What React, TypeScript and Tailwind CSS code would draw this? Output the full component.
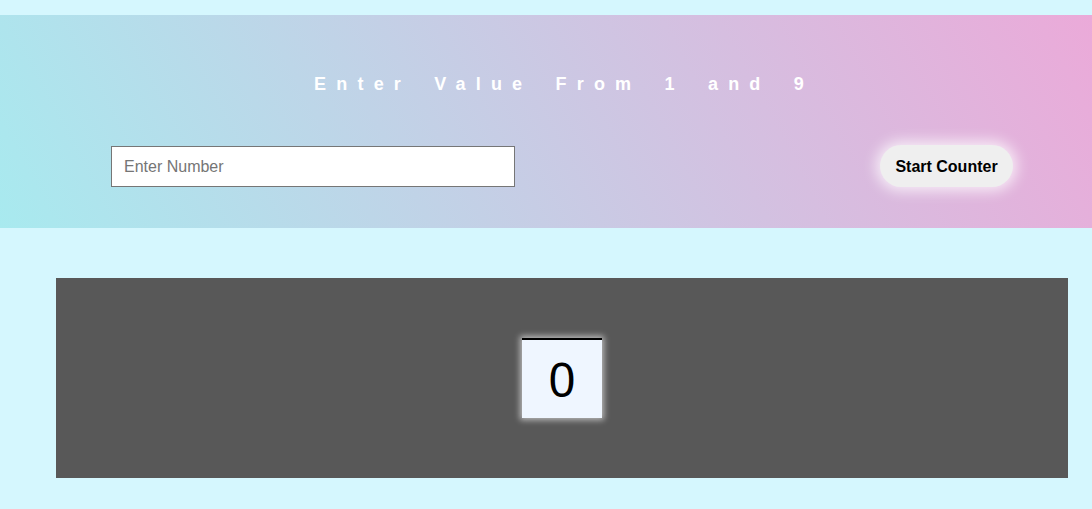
import { useState } from "react";

export default function App() {
  const [value, setValue] = useState("");
  const [count, setCount] = useState(0);

  const start = () => {
    const n = parseInt(value, 10);
    if (n >= 1 && n <= 9) setCount(n);
  };

  return (
    <div className="min-h-[509px] bg-[#d5f7fe] pt-[15px] font-['Liberation_Sans',Arial,sans-serif]">
      {/* header */}
      <div className="h-[213px] bg-linear-[62deg] from-[#a8eaef] to-[#ebaad9]">
        <h1 className="pt-[59px] text-center text-[18px] font-bold leading-[20px] tracking-[10.2px] [word-spacing:8px] text-white pl-[36px]">
          Enter Value From 1 and 9
        </h1>
        <div className="mt-[51px] flex items-center justify-between pl-[111px] pr-[79px]">
          <input
            type="text"
            value={value}
            onChange={(e) => setValue(e.target.value)}
            placeholder="Enter Number"
            className="h-[41px] w-[404px] border border-[#767676] bg-white px-[12px] pt-[1px] text-[16px] text-black placeholder:text-[#757575] outline-none"
          />
          <button
            onClick={start}
            className="h-[42px] w-[133px] rounded-full bg-[#efefef] pt-[1px] text-[16px] font-bold text-black shadow-[0_0_14px_4px_rgba(255,255,255,0.75)]"
          >
            Start Counter
          </button>
        </div>
      </div>

      {/* counter area */}
      <div className="ml-[56px] mt-[50px] flex h-[200px] w-[1012px] items-center justify-center bg-[#585858]">
        <div className="flex h-[80px] w-[80px] items-center justify-center border-t-2 border-black bg-[#eff6ff] text-[48px] leading-none text-black shadow-[0_0_6px_2px_rgba(255,255,255,0.6)] font-['Noto_Sans',sans-serif]">
          {count}
        </div>
      </div>
    </div>
  );
}
